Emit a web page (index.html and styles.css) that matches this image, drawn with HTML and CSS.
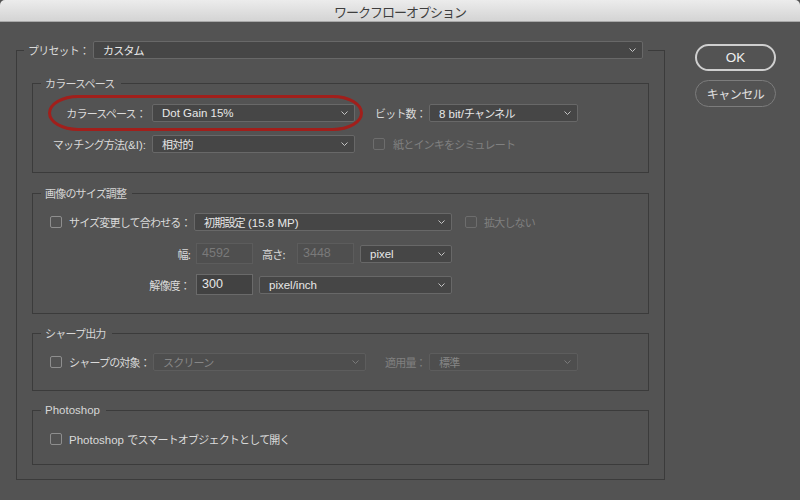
FILE: index.html
```html
<!DOCTYPE html>
<html lang="ja">
<head>
    <meta charset="UTF-8">
    <title>ワークフローオプション</title>
    <link rel="stylesheet" href="styles.css">
</head>
<body>
<div class="window">
    <div class="titlebar">ワークフローオプション</div>

    <div class="dialog">
        <fieldset class="frame">
            <legend class="preset">
                <span class="preset-label jp">プリセット：</span>
                <div class="select preset-select">
                    <span class="jp">カスタム</span>
                    <svg class="chev" width="7" height="4" viewBox="0 0 7 4"><path d="M.5.5 3.5 3.5 6.5.5" fill="none" stroke="currentColor"/></svg>
                </div>
            </legend>

            <!-- カラースペース -->
            <fieldset class="group group-color">
                <legend class="jp">カラースペース</legend>
                <div class="row marked">
                    <span class="label label-color jp">カラースペース：</span>
                    <div class="select w-color">
                        <span>Dot Gain 15%</span>
                        <svg class="chev" width="7" height="4" viewBox="0 0 7 4"><path d="M.5.5 3.5 3.5 6.5.5" fill="none" stroke="currentColor"/></svg>
                    </div>
                    <span class="label label-bits jp">ビット数：</span>
                    <div class="select w-bits">
                        <span>8 bit/<span class="jp">チャンネル</span></span>
                        <svg class="chev" width="7" height="4" viewBox="0 0 7 4"><path d="M.5.5 3.5 3.5 6.5.5" fill="none" stroke="currentColor"/></svg>
                    </div>
                    <div class="ring"></div>
                </div>
                <div class="row gap-13">
                    <span class="label label-color"><span class="jp">マッチング方法</span>(&amp;I):</span>
                    <div class="select w-color">
                        <span class="jp">相対的</span>
                        <svg class="chev" width="7" height="4" viewBox="0 0 7 4"><path d="M.5.5 3.5 3.5 6.5.5" fill="none" stroke="currentColor"/></svg>
                    </div>
                    <span class="check off sim-check"></span>
                    <span class="check-label off jp">紙とインキをシミュレート</span>
                </div>
            </fieldset>

            <!-- 画像のサイズ調整 -->
            <fieldset class="group group-size">
                <legend class="jp">画像のサイズ調整</legend>
                <div class="row">
                    <span class="check"></span>
                    <span class="check-label label-fit jp">サイズ変更して合わせる：</span>
                    <div class="select w-fit">
                        <span><span class="jp">初期設定</span> (15.8 MP)</span>
                        <svg class="chev" width="7" height="4" viewBox="0 0 7 4"><path d="M.5.5 3.5 3.5 6.5.5" fill="none" stroke="currentColor"/></svg>
                    </div>
                    <span class="check off no-enlarge"></span>
                    <span class="check-label off jp">拡大しない</span>
                </div>
                <div class="row tall gap-12">
                    <span class="label label-dim jp">幅:</span>
                    <span class="field off">4592</span>
                    <span class="label label-height jp">高さ:</span>
                    <span class="field off">3448</span>
                    <div class="select w-unit">
                        <span>pixel</span>
                        <svg class="chev" width="7" height="4" viewBox="0 0 7 4"><path d="M.5.5 3.5 3.5 6.5.5" fill="none" stroke="currentColor"/></svg>
                    </div>
                </div>
                <div class="row tall gap-10">
                    <span class="label label-dim jp">解像度：</span>
                    <span class="field">300</span>
                    <div class="select w-res">
                        <span>pixel/inch</span>
                        <svg class="chev" width="7" height="4" viewBox="0 0 7 4"><path d="M.5.5 3.5 3.5 6.5.5" fill="none" stroke="currentColor"/></svg>
                    </div>
                </div>
            </fieldset>

            <!-- シャープ出力 -->
            <fieldset class="group group-sharp">
                <legend class="jp">シャープ出力</legend>
                <div class="row">
                    <span class="check"></span>
                    <span class="check-label label-sharp jp">シャープの対象：</span>
                    <div class="select off w-sharp">
                        <span class="jp">スクリーン</span>
                        <svg class="chev" width="7" height="4" viewBox="0 0 7 4"><path d="M.5.5 3.5 3.5 6.5.5" fill="none" stroke="currentColor"/></svg>
                    </div>
                    <span class="label off label-amount jp">適用量：</span>
                    <div class="select off w-bits">
                        <span class="jp">標準</span>
                        <svg class="chev" width="7" height="4" viewBox="0 0 7 4"><path d="M.5.5 3.5 3.5 6.5.5" fill="none" stroke="currentColor"/></svg>
                    </div>
                </div>
            </fieldset>

            <!-- Photoshop -->
            <fieldset class="group group-ps">
                <legend>Photoshop</legend>
                <div class="row">
                    <span class="check"></span>
                    <span class="check-label">Photoshop <span class="jp">でスマートオブジェクトとして開く</span></span>
                </div>
            </fieldset>
        </fieldset>

        <div class="buttons">
            <button class="btn ok">OK</button>
            <button class="btn cancel">キャンセル</button>
        </div>
    </div>
</div>
</body>
</html>
```

FILE: styles.css
```css
:root {
    --panel: #535353;
    --line: #3b3b3b;
    --text: #dadada;
    --value: #e8e8e8;
    --muted: #808080;
    --control: #464646;
    --control-border: #686868;
}

body {
    margin: 0;
    background: var(--panel);
    color: var(--text);
    font-family: "Liberation Sans", "Noto Sans CJK JP", sans-serif;
    font-size: 11.5px;
    line-height: 14px;
}

.jp {
    font-family: "Noto Sans CJK JP", sans-serif;
    font-size: 11px;
    letter-spacing: -0.8px;
}

.window {
    width: 800px;
    height: 500px;
    display: flex;
    flex-direction: column;
}

.titlebar {
    height: 22px;
    box-sizing: border-box;
    border-bottom: 1px solid #a8a8a8;
    border-radius: 5px 5px 0 0;
    background: linear-gradient(#ececec, #d4d4d4);
    color: #3e3e3e;
    font-family: "Noto Sans CJK JP", sans-serif;
    font-size: 13px;
    letter-spacing: -1px;
    line-height: 23px;
    text-align: center;
}

.dialog {
    display: flex;
    gap: 30px;
    padding: 19px 0 0 16px;
}

/* frames */
.frame {
    width: 649px;
    min-width: 0;
    box-sizing: border-box;
    margin: 0;
    padding: 17px 15px 14px;
    border: 1px solid var(--line);
}

.preset {
    display: flex;
    align-items: center;
    padding: 0 5px 0 4px;
    margin-left: -8px;
}

.preset-label {
    width: 60px;
    margin-right: 5px;
    white-space: nowrap;
}

.preset-select {
    width: 550px;
}

.group {
    position: relative;
    min-width: 0;
    margin: 0 0 12px;
    padding: 13px 16px 19px 17px;
    border: 1px solid var(--line);
}

.group legend {
    padding: 0 6px 0 4px;
    margin-left: -9px;
    line-height: 14px;
    color: #d6d6d6;
}

.group-color {
    padding-top: 14px;
    margin-bottom: 13px;
}

.group-size {
    padding-bottom: 18px;
}

.group-ps {
    margin-bottom: 0;
    padding-bottom: 16px;
}

/* rows */
.row {
    display: flex;
    align-items: center;
    height: 18px;
    white-space: nowrap;
}

.row.tall {
    height: 21px;
}

.gap-13 { margin-top: 13px; }
.gap-12 { margin-top: 12px; }
.gap-10 { margin-top: 10px; }

.marked {
    position: relative;
}

.ring {
    position: absolute;
    left: -2px;
    top: -9px;
    width: 315px;
    height: 36px;
    box-sizing: border-box;
    border: 3px solid #a11f1b;
    border-radius: 30px / 18px;
    pointer-events: none;
}

.label {
    text-align: right;
}

.label.off,
.check-label.off {
    color: var(--muted);
}

.label-color { width: 96px; margin-right: 6px; }
.label-bits { width: 50px; margin: 0 4px 0 20px; text-align: left; }
.label-dim { width: 140px; margin-right: 6px; }
.label-height { width: 30px; margin: 0 5px 0 9px; text-align: left; }
.label-amount { width: 44px; margin: 0 0 0 19px; text-align: left; }

.label-fit { width: 118px; margin-right: 7px; }
.label-sharp { width: 80px; margin-right: 4px; }

/* controls */
.select {
    display: flex;
    align-items: center;
    justify-content: space-between;
    box-sizing: border-box;
    height: 18px;
    padding: 0 6px 0 9px;
    background: var(--control);
    border: 1px solid var(--control-border);
    border-radius: 2px;
    color: var(--value);
}

.select .chev {
    color: #c4c4c4;
    flex: none;
}

.select.off {
    background: #4e4e4e;
    border-color: #5d5d5d;
    color: #868686;
}

.select.off .chev {
    color: #7a7a7a;
}

.w-color { width: 203px; }
.w-bits { width: 149px; }
.w-fit { width: 258px; }
.w-unit { width: 92px; margin-left: 6px; }
.w-res { width: 193px; margin-left: 6px; }
.w-sharp { width: 213px; }

.field {
    box-sizing: border-box;
    width: 57px;
    height: 21px;
    padding: 0 5px;
    background: #424242;
    border: 1px solid #6a6a6a;
    color: var(--value);
    font-size: 12.5px;
    line-height: 19px;
}

.field.off {
    background: #4f4f4f;
    border-color: #5c5c5c;
    color: #7a7a7a;
}

.check {
    flex: none;
    width: 12px;
    height: 12px;
    box-sizing: border-box;
    border: 1px solid #8e8e8e;
    border-radius: 2px;
    margin-right: 7px;
}

.check.off {
    border-color: #6d6d6d;
}

.sim-check { margin-left: 18px; margin-right: 8px; }
.no-enlarge { margin-left: 13px; }

/* buttons */
.buttons {
    display: flex;
    flex-direction: column;
    gap: 9px;
    margin-top: 3px;
}

.btn {
    width: 81px;
    height: 27px;
    box-sizing: border-box;
    border: 1px solid #7c7c7c;
    border-radius: 14px;
    background: transparent;
    color: #e0e0e0;
    font-family: "Liberation Sans", "Noto Sans CJK JP", sans-serif;
    font-size: 13.5px;
    padding: 0;
}

.btn.ok {
    border: 2px solid #cfcfcf;
    color: #efefef;
}

.btn.cancel {
    font-family: "Noto Sans CJK JP", sans-serif;
    font-size: 12px;
    letter-spacing: -0.5px;
}
```
